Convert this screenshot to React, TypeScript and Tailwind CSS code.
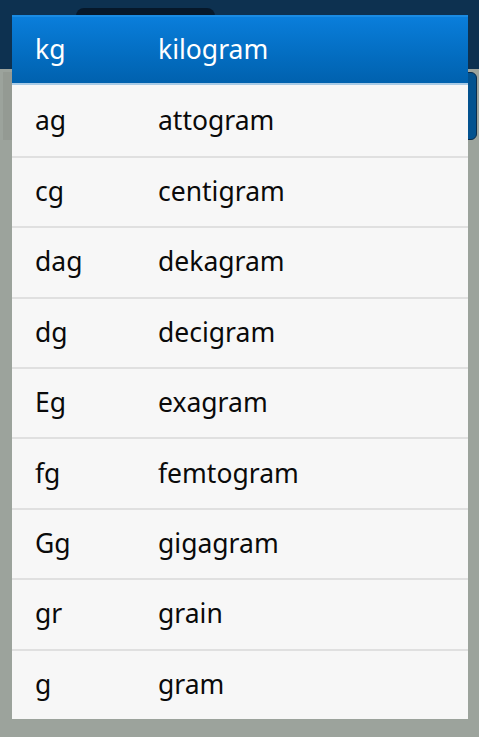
const units: [string, string][] = [
  ['kg', 'kilogram'],
  ['ag', 'attogram'],
  ['cg', 'centigram'],
  ['dag', 'dekagram'],
  ['dg', 'decigram'],
  ['Eg', 'exagram'],
  ['fg', 'femtogram'],
  ['Gg', 'gigagram'],
  ['gr', 'grain'],
  ['g', 'gram'],
];

export default function App() {
  const selected = 'kg';

  return (
    <div
      className="relative h-[737px] w-[479px] overflow-hidden bg-[#9ca39c]"
      style={{ fontFamily: '"Noto Sans", "Open Sans", sans-serif' }}
    >
      {/* app behind the dialog */}
      <div className="flex h-[69px] flex-col bg-[#0d3150] pt-[8px] pl-[76px]">
        <div className="h-[8px] w-[139px] rounded-t-[10px] bg-[#06182a]" />
      </div>
      <div className="flex justify-between pt-[3px] pl-[3px] pr-[2px]">
        <div className="h-[68px] w-[9px] bg-[#949a93]" />
        <div className="h-[68px] w-[14px] rounded-r-[6px] border border-[#0b2d4c] bg-[#03528f]" />
      </div>

      {/* dialog list */}
      <div className="absolute top-[15px] left-[12px] flex w-[456px] flex-col bg-[#f7f7f7]">
        {units.map(([abbr, name], i) => {
          const isSel = abbr === selected;
          return (
            <div
              key={abbr}
              className={
                isSel
                  ? 'flex h-[70.4px] items-center border-t-2 border-b-2 border-t-[#1a8be2] border-b-[#a9cbe6] bg-gradient-to-b from-[#0a7edb] to-[#0061ae] text-white'
                  : i > 1
                    ? 'flex h-[70.4px] items-center border-t-2 border-[#e0e0e0] text-[#0a0a0a]'
                    : 'flex h-[70.4px] items-center text-[#0a0a0a]'
              }
            >
              <span className="w-[146px] pl-[23px] text-[26.5px]">{abbr}</span>
              <span className="text-[26.5px]">{name}</span>
            </div>
          );
        })}
      </div>
    </div>
  );
}
